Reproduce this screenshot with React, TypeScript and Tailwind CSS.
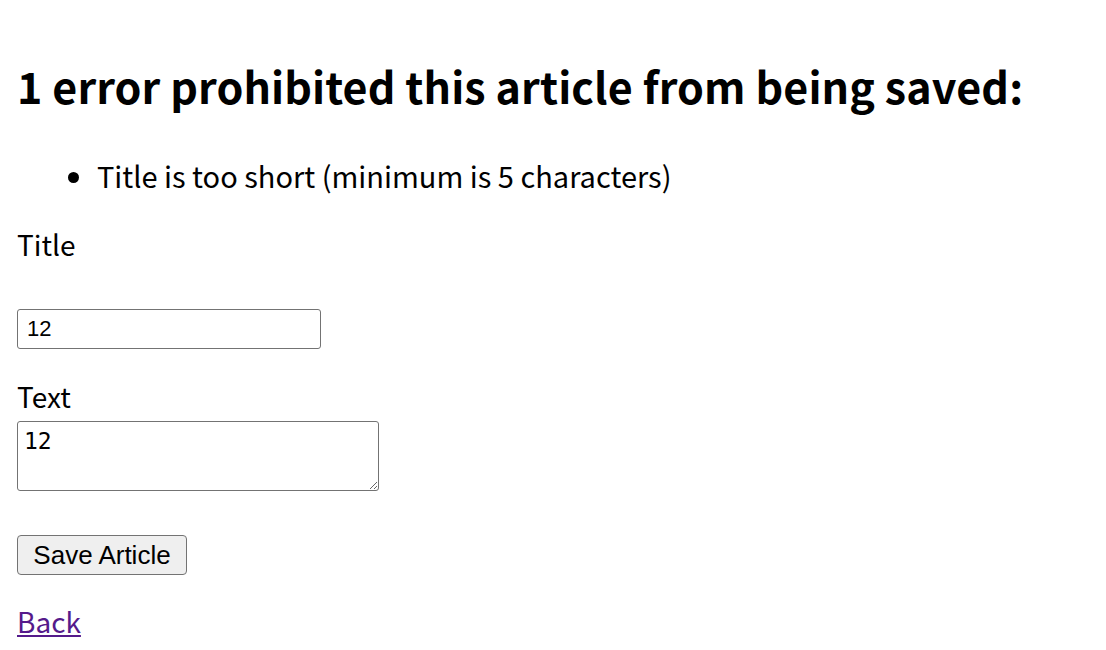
const App = () => {
  return (
    <div className="min-h-[650px] bg-white pl-[17px] text-black font-['Noto_Sans_CJK_KR','Noto_Sans',sans-serif]">
      {/* error summary */}
      <div className="pt-[64px]">
        <h2 className="text-[43px] leading-none font-bold tracking-[0.1px]">
          1 error prohibited this article from being saved:
        </h2>
        <ul className="mt-[54px] list-disc pl-[80px] text-[29px] leading-none">
          <li>Title is too short (minimum is 5 characters)</li>
        </ul>
      </div>

      {/* form */}
      <form className="flex flex-col items-start">
        <label className="mt-[40px] text-[28px] leading-none">Title</label>
        <input
          type="text"
          defaultValue="12"
          className="mt-[51px] w-[304px] h-[40px] border-[1.5px] border-[#737373] rounded-[3px] pl-[9px] text-[22px] font-['Liberation_Sans',Arial,sans-serif] outline-none"
        />
        <label className="mt-[33px] text-[28px] leading-none">Text</label>
        <textarea
          defaultValue="12"
          className="mt-[11px] w-[362px] h-[70px] border-[1.5px] border-[#737373] rounded-[3px] px-[6px] pt-[5px] text-[23px] leading-tight font-['DejaVu_Sans_Mono',monospace] outline-none"
        />
        <button
          type="button"
          className="mt-[44px] w-[170px] h-[40px] bg-[#efefef] border-[1.5px] border-[#737373] rounded-[4px] text-[26px] leading-none font-['Liberation_Sans',Arial,sans-serif]"
        >
          Save Article
        </button>
      </form>

      <a href="#" className="mt-[32px] inline-block text-[28px] leading-none text-[#551a8b] underline">
        Back
      </a>
    </div>
  );
};

export default App;
